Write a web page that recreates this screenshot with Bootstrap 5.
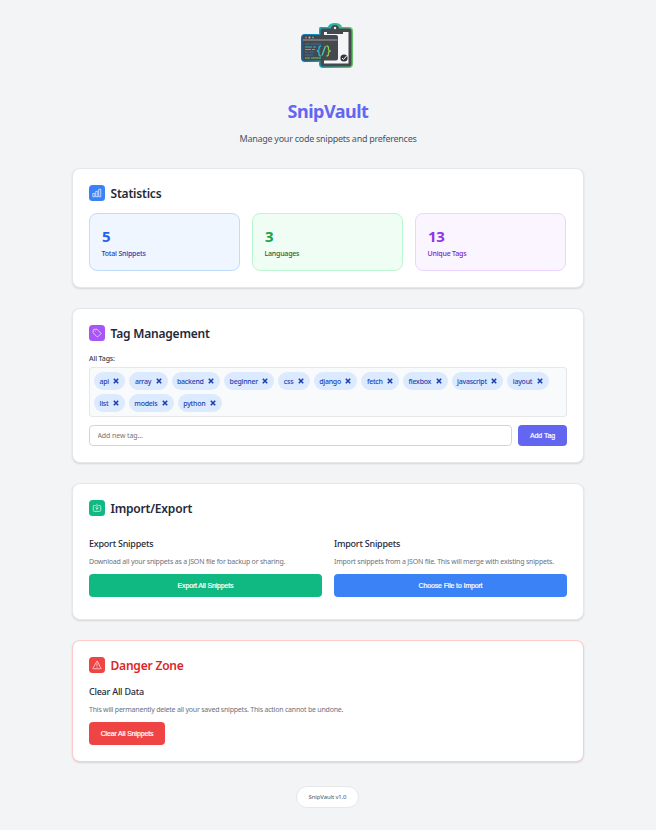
<!DOCTYPE html>
<html lang="en">
<head>
<meta charset="utf-8">
<meta name="viewport" content="width=device-width, initial-scale=1">
<title>SnipVault</title>
<link href="https://cdn.jsdelivr.net/npm/bootstrap@5.3.0/dist/css/bootstrap.min.css" rel="stylesheet">
<style>
body{background:#f3f4f6;font-family:"Noto Sans","Open Sans",sans-serif;color:#1f2937;font-size:7px;line-height:10px;overflow:hidden}
.page{width:512px;height:830px}
.logo{width:54px;height:48px;margin-top:22px}
.brand{color:#6366f1;font-size:18px;line-height:24px;font-weight:700;margin-top:29px;letter-spacing:-.5px}
.tagline{font-size:9px;line-height:14px;color:#4b5563;margin-top:9px;letter-spacing:-.27px}
.panel{border:1px solid #e5e7eb;border-radius:8px;background:#fff;box-shadow:0 1px 2px rgba(0,0,0,.13);padding:16px;margin-bottom:20px}
.p-stat{height:120px;margin-top:22px}.p-tags{height:155px}.p-io{height:137px}.p-danger{height:122px;border-color:#fecaca;margin-bottom:24px}
.panel h2{font-size:12px;line-height:15px;padding-top:1px;font-weight:600;margin:0;color:#1f2937;letter-spacing:-.2px}
.panel .danger-title{color:#dc2626}
.tile{width:16px;height:16px;border-radius:3.5px;margin-right:5.5px}
.tile svg{width:10px;height:10px;fill:none;stroke:#fff;stroke-width:1.9;stroke-linecap:round;stroke-linejoin:round;opacity:.85}
.t-blue{background:#3b82f6}.t-purple{background:#a855f7}.t-green{background:#10b981}.t-red{background:#ef4444}
.stats{gap:12px;margin-top:12px;padding-right:1px}
.stat{flex:1;height:58px;border:1px solid;border-radius:8px;padding:14px 12px 0 11.5px}
.stat b{display:block;font-size:15px;line-height:16px;letter-spacing:-.4px;padding-left:.5px}
.stat span{display:block;font-size:7px;line-height:10px;margin-top:5px;font-weight:500;letter-spacing:-.2px}
.s-blue{background:#eff6ff;border-color:#bfdbfe;color:#1e40af}.s-blue b{color:#2563eb}
.s-green{background:#f0fdf4;border-color:#bbf7d0;color:#166534}.s-green b{color:#16a34a}
.s-purple{background:#faf5ff;border-color:#e9d5ff;color:#7e22ce}.s-purple b{color:#9333ea}
.lbl{margin-top:13px;font-weight:500;color:#374151;letter-spacing:-.15px}
.tagbox{border:1px solid #e5e7eb;border-radius:3px;background:#f9fafb;height:50px;margin-top:3px;padding:4px;gap:4px;align-content:flex-start}
.chip{height:18px;border-radius:9px;background:#dbeafe;color:#1e40af;font-weight:500;padding:1px 5.5px 0 5.5px;letter-spacing:-.25px}
.chip svg{width:6px;height:6px;stroke:#1e40af;stroke-width:1.6;margin:-1px .5px 0 4.4px}
.addrow{gap:6px;margin-top:8px}
.addrow input{height:21px;border:1px solid #d1d5db;border-radius:4px;font-size:7px;line-height:10px;padding:0 8px 0 7.5px;color:#1f2937;letter-spacing:-.1px}
.addrow input::placeholder{color:#757575}
.act{font-family:"Liberation Sans",Arial,sans-serif;font-size:7px;line-height:10px;font-weight:500;color:#fff;border:0;border-radius:4px;height:23px;padding:1px 0 0;letter-spacing:-.15px;-webkit-text-stroke:.2px #fff}
.act:hover{color:#fff}
.a-add{background:#6366f1;width:49px;height:21px;flex:none;letter-spacing:-.05px}.a-exp{background:#10b981}.a-imp{background:#3b82f6}.a-clr{background:#ef4444;width:76px}
.io{gap:12px;margin-top:21px}.io>div{flex:1;min-width:0}
h3{font-size:9px;line-height:14px;font-weight:500;margin:0;color:#1f2937;letter-spacing:-.23px}
.desc{color:#6b7280;font-size:7px;line-height:10px;margin:5.5px 0 7px;white-space:nowrap;letter-spacing:-.2px}
.p-danger h3{margin-top:12px}
.p-danger .desc{letter-spacing:-.215px}
.ver{background:#fff;border:1px solid #e5e7eb;border-radius:11px;height:22px;width:63px;font-size:6px;color:#4b5563;margin-right:1px;letter-spacing:-.13px}
</style>
<script src="https://cdn.jsdelivr.net/npm/bootstrap@5.3.0/dist/js/bootstrap.bundle.min.js"></script>
</head>
<body>
<main class="page mx-auto d-flex flex-column">
<header class="d-flex flex-column align-items-center">
<svg class="logo" viewBox="0 0 54 48">
<defs><linearGradient id="edge" x1="0" x2="1"><stop stop-color="#1267b8"/><stop offset=".45" stop-color="#16aebc"/><stop offset="1" stop-color="#65c466"/></linearGradient></defs>
<path d="M19 5h8q1-4 7-4t7 4h7q4 0 4 4v33q0 4-4 4H22q-4 0-4-4v-2H4q-4 0-4-4V16q0-4 4-4h14V9q0-4 1-4Z" fill="url(#edge)"/>
<rect x="19.500" y="6.500" width="31" height="38" rx="2.500" fill="#45484c"/>
<path d="M23 10h24.500v31.500H23Z" fill="#f4f5f6"/>
<path d="M26 12V8q0-1 2-1h2q0-4 4-4t4 4h2q2 0 2 1v4Z" fill="#45484c"/><circle cx="34" cy="6" r="1.200" fill="#eef"/>
<rect x="1.500" y="13" width="35.500" height="25.500" rx="2" fill="#45484c"/><path d="M2 18h34.500" stroke="#b7bbc0" stroke-width=".8"/>
<circle cx="5" cy="15.500" r="1" fill="#f15645"/><circle cx="8.500" cy="15.500" r="1" fill="#f3be3d"/><circle cx="12" cy="15.500" r="1" fill="#49b465"/>
<g fill="none" stroke-width="1"><path stroke="#2d73b9" d="M4 22h5m1 0h10M4 30h3m1 0h5M4 33h8"/><path stroke="#26bdc9" d="M4 25h7m1 0h3M4 27.500h6m1 0h3"/><path stroke="#7cbf55" d="M4 36h5m1 0h10"/></g>
<g fill="none" stroke-width="1.300"><path stroke="#20b9d8" d="M20 24q-2 0-2 2v1.500q0 1-2 1.500 2 .5 2 1.500v1.500q0 2 2 2"/><path stroke="#4ccbb5" d="m24.500 24-3.500 9.500"/><path stroke="#8acb50" d="M25.500 24q2 0 2 2v1.500q0 1 2 1.500-2 .5-2 1.500v1.500q0 2-2 2"/></g>
<circle cx="43" cy="36" r="3.600" fill="#33363c"/><path d="m41 36 1.500 1.500 3-3.500" fill="none" stroke="#fff" stroke-width="1"/>
</svg>
<h1 class="brand mb-0">SnipVault</h1>
<p class="tagline mb-0">Manage your code snippets and preferences</p>
</header>
<section class="panel p-stat">
<div class="d-flex align-items-center"><span class="tile t-blue d-flex align-items-center justify-content-center"><svg viewBox="0 0 24 24"><path d="M3 13h4v8H3zM10 8h4v13h-4zM17 3h4v18h-4z"/></svg></span><h2>Statistics</h2></div>
<div class="stats d-flex">
<div class="stat s-blue"><b>5</b><span>Total Snippets</span></div>
<div class="stat s-green"><b>3</b><span>Languages</span></div>
<div class="stat s-purple"><b>13</b><span>Unique Tags</span></div>
</div>
</section>
<section class="panel p-tags">
<div class="d-flex align-items-center"><span class="tile t-purple d-flex align-items-center justify-content-center"><svg viewBox="0 0 24 24"><path d="M3 5a2 2 0 0 1 2-2h7l9 9a2 2 0 0 1 0 2l-7 7a2 2 0 0 1-2 0l-9-9zM7.500 7.500h.01"/></svg></span><h2>Tag Management</h2></div>
<div class="lbl">All Tags:</div>
<div class="tagbox d-flex flex-wrap" id="tags"></div>
<div class="addrow d-flex"><input class="form-control" type="text" placeholder="Add new tag..."><button class="btn act a-add">Add Tag</button></div>
</section>
<section class="panel p-io">
<div class="d-flex align-items-center"><span class="tile t-green d-flex align-items-center justify-content-center"><svg viewBox="0 0 24 24"><path d="M8 6H5a2 2 0 0 0-2 2v10a2 2 0 0 0 2 2h14a2 2 0 0 0 2-2V8a2 2 0 0 0-2-2h-3M12 3v12M8.500 11.500 12 15l3.500-3.500"/></svg></span><h2>Import/Export</h2></div>
<div class="io d-flex">
<div><h3>Export Snippets</h3><p class="desc">Download all your snippets as a JSON file for backup or sharing.</p><button class="btn act a-exp w-100 d-block">Export All Snippets</button></div>
<div><h3>Import Snippets</h3><p class="desc">Import snippets from a JSON file. This will merge with existing snippets.</p><button class="btn act a-imp w-100 d-block">Choose File to Import</button></div>
</div>
</section>
<section class="panel p-danger">
<div class="d-flex align-items-center"><span class="tile t-red d-flex align-items-center justify-content-center"><svg viewBox="0 0 24 24"><path d="M12 3 2.500 19a1 1 0 0 0 1 2h17a1 1 0 0 0 1-2zM12 9v5M12 17.500h.01"/></svg></span><h2 class="danger-title">Danger Zone</h2></div>
<h3>Clear All Data</h3><p class="desc">This will permanently delete all your saved snippets. This action cannot be undone.</p><button class="btn act a-clr d-block">Clear All Snippets</button>
</section>
<footer class="d-flex justify-content-center"><span class="ver d-flex align-items-center justify-content-center">SnipVault v1.0</span></footer>
</main>
<script>
document.getElementById('tags').innerHTML=['api','array','backend','beginner','css','django','fetch','flexbox','javascript','layout','list','models','python'].map(t=>`<span class="chip d-inline-flex align-items-center">${t}<svg viewBox="0 0 6 6"><path d="M.8.8l4.400 4.400M5.200.8.8 5.200"/></svg></span>`).join('');
</script>
</body>
</html>
